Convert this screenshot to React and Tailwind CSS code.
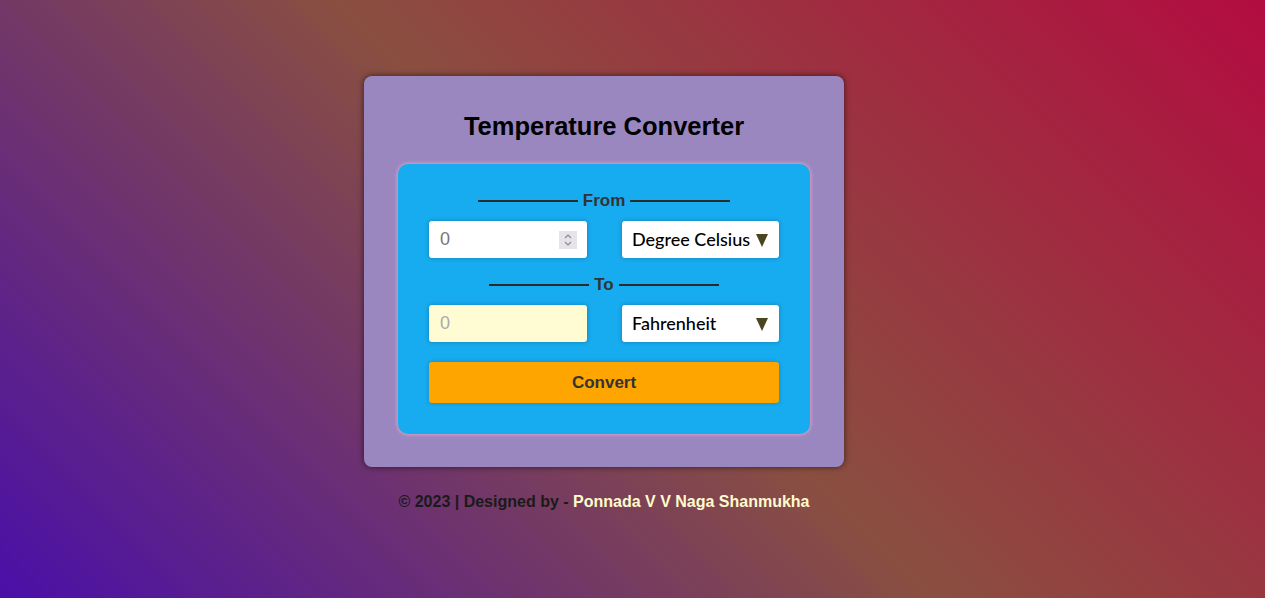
import { useState } from "react";

function Divider({ label }) {
  return (
    <div className="flex items-center justify-center gap-[5px]">
      <span className="h-[2px] w-[100px] bg-[#2b2b2b]"></span>
      <span className="text-[17px] font-bold leading-5 text-[#333]">{label}</span>
      <span className="h-[2px] w-[100px] bg-[#2b2b2b]"></span>
    </div>
  );
}

function Spinner() {
  return (
    <span className="absolute right-[10px] top-[10px] flex h-[18px] w-[18px] items-center justify-center bg-[#e6e4ea]">
      <svg width="10" height="14" viewBox="0 0 10 14" fill="none" stroke="#8a8a8a" strokeWidth="1.2">
        <path d="M2 5 L5 2 L8 5" />
        <path d="M2 9 L5 12 L8 9" />
      </svg>
    </span>
  );
}

function UnitSelect({ value, onChange }) {
  return (
    <div className="relative h-[37px] w-[157px]">
      <select
        value={value}
        onChange={(e) => onChange(e.target.value)}
        className="h-full w-full appearance-none rounded-[3px] bg-white pl-[10px] text-[18px] font-medium text-black shadow-[0_0_4px_rgba(0,0,0,0.25)] outline-none font-['Lato','Open_Sans',sans-serif]"
      >
        <option>Degree Celsius</option>
        <option>Fahrenheit</option>
        <option>Kelvin</option>
      </select>
      <svg
        className="pointer-events-none absolute right-[11px] top-[13px]"
        width="12"
        height="13"
        viewBox="0 0 12 13"
      >
        <path d="M0 0 H12 L6 13 Z" fill="#4a4520" />
      </svg>
    </div>
  );
}

export default function App() {
  const [from, setFrom] = useState("Degree Celsius");
  const [to, setTo] = useState("Fahrenheit");

  return (
    <div className="flex min-h-[598px] flex-col items-center bg-[linear-gradient(45deg,#4a0fa8_0%,#8a4f40_50%,#b30c40_100%)] pr-[57px] pt-[76px] font-['Liberation_Sans',Arial,sans-serif]">
      <div className="w-[480px] rounded-[8px] bg-[#9a87c0] px-[34px] pb-[33px] pt-[38px] shadow-[0_0_6px_rgba(0,0,0,0.6)]">
        <h1 className="text-center text-[25.5px] font-bold leading-6 text-black">Temperature Converter</h1>

        <div className="mt-[26px] rounded-[10px] bg-[#17abef] px-[31px] pb-[31px] pt-[27px] shadow-[0_0_4px_rgba(255,180,200,0.9)]">
          <Divider label="From" />

          <div className="mt-[10px] flex justify-between">
            <div className="relative h-[37px] w-[158px]">
              <input
                type="text"
                placeholder="0"
                className="h-full w-full rounded-[3px] bg-white pl-[11px] text-[18px] text-black shadow-[0_0_4px_rgba(0,0,0,0.25)] outline-none placeholder:text-[#777]"
              />
              <Spinner />
            </div>
            <UnitSelect value={from} onChange={setFrom} />
          </div>

          <div className="mt-[17px]">
            <Divider label="To" />
          </div>

          <div className="mt-[10px] flex justify-between">
            <input
              type="text"
              placeholder="0"
              readOnly
              className="h-[37px] w-[158px] rounded-[3px] bg-[#fffbd3] pl-[11px] text-[18px] text-black shadow-[0_0_4px_rgba(0,0,0,0.25)] outline-none placeholder:text-[#aaa]"
            />
            <UnitSelect value={to} onChange={setTo} />
          </div>

          <button className="mt-[20px] h-[41px] w-full rounded-[3px] bg-[#ffa500] text-[17px] font-bold text-[#333] shadow-[0_0_4px_rgba(0,0,0,0.2)]">
            Convert
          </button>
        </div>
      </div>

      <p className="mt-[23px] text-[16px] font-bold leading-6 text-[#1a1a1a]">
        © 2023 | Designed by - <span className="text-[#fffacd]">Ponnada V V Naga Shanmukha</span>
      </p>
    </div>
  );
}
